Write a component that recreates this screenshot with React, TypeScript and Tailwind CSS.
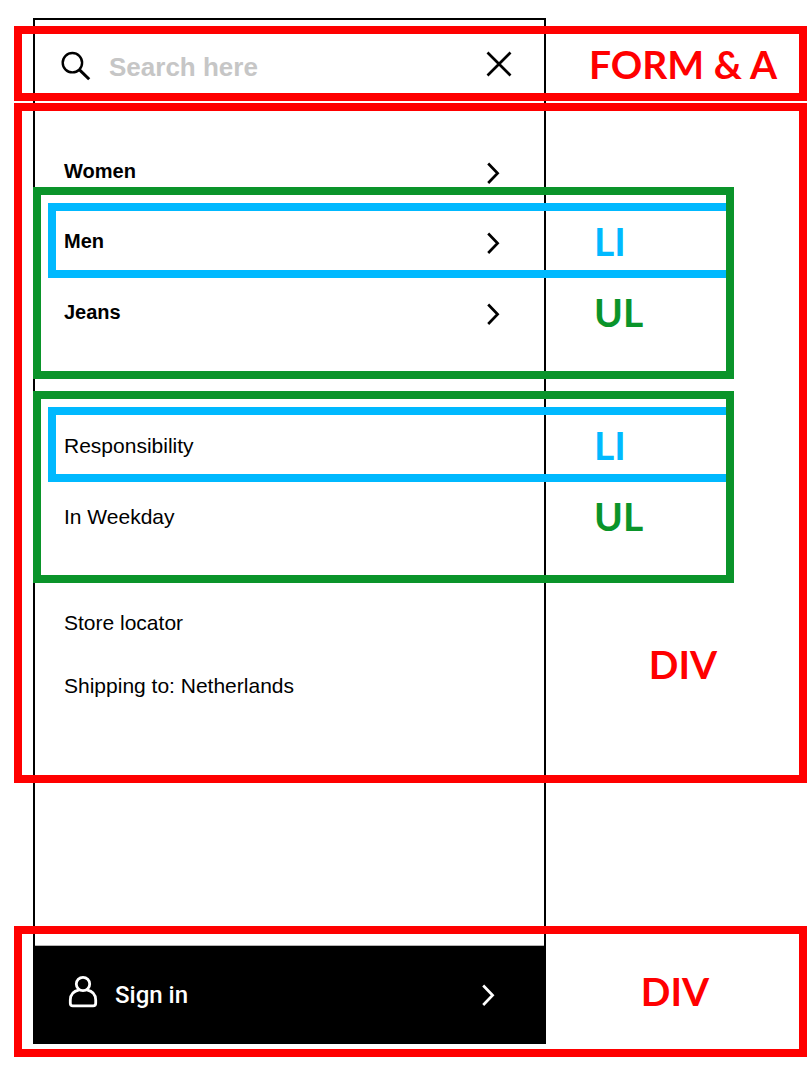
import type { ReactNode } from "react";

function Chevron() {
  return (
    <svg viewBox="0 0 14 24" className="h-6 w-[14px] shrink-0" fill="none" stroke="currentColor" strokeWidth="2.7" aria-hidden="true">
      <path d="M2.200 2.500 11.600 12.300 2.200 22" />
    </svg>
  );
}

function SearchIcon() {
  return (
    <svg viewBox="0 0 30 30" className="h-[30px] w-[30px] shrink-0" fill="none" stroke="currentColor" strokeWidth="2.400" aria-hidden="true">
      <circle cx="11.400" cy="11.700" r="9.700" />
      <path d="M18.300 18.600 28.200 28.300" strokeWidth="3" />
    </svg>
  );
}

function CloseIcon() {
  return (
    <svg viewBox="0 0 26 26" className="h-[26px] w-[26px]" fill="none" stroke="currentColor" strokeWidth="2.700" aria-hidden="true">
      <path d="M1.500 1.500 24.500 24.500M24.500 1.500 1.500 24.500" />
    </svg>
  );
}

function PersonIcon() {
  return (
    <svg viewBox="0 0 30 34" className="h-[34px] w-[30px] shrink-0" fill="none" stroke="currentColor" strokeWidth="2.800" aria-hidden="true">
      <circle cx="15" cy="9" r="6.700" />
      <path d="M11.200 14.800C5.400 16 2.300 19.800 2.300 25V28.200C2.300 29.900 3.200 30.800 4.900 30.800H25.100C26.800 30.800 27.700 29.900 27.700 28.200V25C27.700 19.800 24.600 16 18.800 14.800" />
    </svg>
  );
}

function Label({ children, className }: { children: ReactNode; className: string }) {
  return (
    <span className={`shrink-0 font-[Lato,sans-serif] text-[39px] leading-10 font-bold whitespace-nowrap ${className}`}>
      {children}
    </span>
  );
}

function MenuLink({ children, bold, arrow }: { children: ReactNode; bold?: boolean; arrow?: boolean }) {
  return (
    <a
      href="#"
      className={`flex flex-1 items-center justify-between pr-[46px] leading-[27px] ${bold ? "text-[20px] font-bold" : "text-[21px]"}`}
    >
      {children}
      {arrow && (
        <span className="-my-2 pt-[2px]">
          <Chevron />
        </span>
      )}
    </a>
  );
}

function AnnotatedList({ items, bold, arrow, className }: { items: [string, string]; bold?: boolean; arrow?: boolean; className?: string }) {
  return (
    <ul className={`mr-[65px] ml-[11px] border-8 border-[#0a942a] pt-2 pb-[22px] ${className ?? ""}`}>
      <li className="ml-[7px] flex items-center border-y-8 border-l-8 border-[#00b9ff] pt-[17px] pb-[15px] pl-2">
        <MenuLink bold={bold} arrow={arrow}>{items[0]}</MenuLink>
        <Label className="-my-2 w-[180px] pb-[2px] pl-12 text-[#00b9ff]">LI</Label>
      </li>
      <li className="flex items-center pt-[21px] pb-[23px] pl-[23px]">
        <MenuLink bold={bold} arrow={arrow}>{items[1]}</MenuLink>
        <Label className="-my-2 w-[180px] pb-[2px] pl-12 text-[#0a942a]">UL</Label>
      </li>
    </ul>
  );
}

export default function App() {
  return (
    <main className="relative bg-white pt-[26px] pb-6 pl-[14px] font-['Liberation_Sans',Arial,sans-serif] text-black">
      <div className="absolute top-[18px] right-[261px] bottom-[37px] left-[33px] border-2 border-black" />

      <section className="relative flex items-center border-8 border-[#ff0000] py-2">
        <form className="flex min-w-0 flex-1 items-center gap-[18px] pl-[39px]" onSubmit={(e) => e.preventDefault()}>
          <label htmlFor="search" aria-label="Search" className="pt-1">
            <SearchIcon />
          </label>
          <input
            id="search"
            type="search"
            placeholder="Search here"
            className="min-w-0 flex-1 bg-transparent pt-2 text-[26px] leading-[35px] font-bold outline-none placeholder:text-[#c6c6c6] placeholder:opacity-100"
          />
        </form>
        <a href="#" aria-label="Close menu" className="pr-[34px]">
          <CloseIcon />
        </a>
        <Label className="w-[253px] pl-[21px] text-center text-[#ff0000]">FORM &amp; A</Label>
      </section>

      <section className="relative mt-[2px] border-8 border-[#ff0000]">
        <div className="mr-[253px] flex pt-[47px] pb-[2px] pl-[42px]">
          <MenuLink bold arrow>Women</MenuLink>
        </div>
        <AnnotatedList items={["Men", "Jeans"]} bold arrow />
        <AnnotatedList items={["Responsibility", "In Weekday"]} className="mt-3" />
        <div className="flex">
          <div className="flex flex-1 flex-col gap-9 pt-[26px] pb-[76px] pl-[42px]">
            <MenuLink>Store locator</MenuLink>
            <MenuLink>Shipping to: Netherlands</MenuLink>
          </div>
          <Label className="w-[253px] pt-[61px] pl-[21px] text-center text-[#ff0000]">DIV</Label>
        </div>
      </section>

      <section className="relative mt-[143px] flex items-center border-8 border-[#ff0000] pt-[11px] pb-[5px]">
        <a
          href="#"
          className="ml-[13px] flex flex-1 items-center gap-[17px] border-t border-[#b5b5b5] bg-black py-8 pr-[49px] pl-[33px] text-white"
        >
          <span className="-mt-[6px]">
            <PersonIcon />
          </span>
          <span className="flex-1 font-[Roboto,sans-serif] text-[24px] leading-[34px] font-medium">Sign in</span>
          <Chevron />
        </a>
        <Label className="w-[255px] pb-2 pl-[7px] text-center text-[#ff0000]">DIV</Label>
      </section>
    </main>
  );
}
